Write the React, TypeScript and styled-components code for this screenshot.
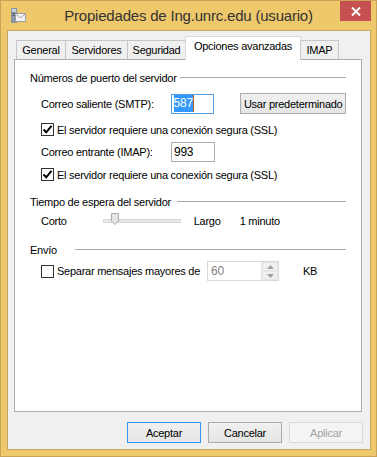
import { createGlobalStyle } from "styled-components";
import styled from "styled-components";

const GlobalStyle = createGlobalStyle`
  html, body {
    margin: 0;
    padding: 0;
    background: #f0c86c;
  }
  * {
    box-sizing: border-box;
  }
`;

const Window = styled.div`
  width: 377px;
  height: 457px;
  background: #f0c86c;
  border: 1px solid #c9a458;
  display: flex;
  flex-direction: column;
  font-family: "Liberation Sans", Arial, sans-serif;
  font-size: 11px;
  letter-spacing: -0.25px;
  color: #000;
`;

const TitleBar = styled.div`
  height: 29px;
  position: relative;
  display: flex;
  align-items: center;
  justify-content: center;
`;

const AppIcon = styled.svg`
  position: absolute;
  left: 8px;
  top: 5px;
`;

const Title = styled.div`
  font-size: 15px;
  letter-spacing: -0.2px;
  color: #333;
`;

const CloseButton = styled.div`
  position: absolute;
  right: 5px;
  top: 0;
  width: 31px;
  height: 20px;
  background: #c75050;
  display: flex;
  align-items: center;
  justify-content: center;
`;

const Client = styled.div`
  flex: 1;
  margin: 0 5px 6px 6px;
  border: 1px solid #c4a867;
  background: #f0f0f0;
  padding: 5px 7px 0 6px;
  display: flex;
  flex-direction: column;
`;

const TabStrip = styled.div`
  height: 23px;
  display: flex;
  align-items: flex-end;
  padding-left: 2px;
  position: relative;
  z-index: 1;
`;

const Tab = styled.div<{ $w: number; $active?: boolean }>`
  width: ${({ $w }) => $w}px;
  height: ${({ $active }) => ($active ? 24 : 19)}px;
  margin-left: -1px;
  margin-bottom: ${({ $active }) => ($active ? -1 : 0)}px;
  border: 1px solid ${({ $active }) => ($active ? "#d9d9d9" : "#c6c6c6")};
  border-bottom: none;
  background: ${({ $active }) => ($active ? "#ffffff" : "#f0f0f0")};
  display: flex;
  justify-content: center;
  padding-top: 3px;
  white-space: nowrap;

  &:first-child {
    margin-left: 0;
  }
`;

const Panel = styled.div`
  width: 348px;
  height: 353px;
  border: 1px solid #adadad;
  background: #fff;
  padding: 11px 15px 0 15px;
  display: flex;
  flex-direction: column;
`;

const GroupHeader = styled.div<{ $mt: number }>`
  height: 14px;
  margin-top: ${({ $mt }) => $mt}px;
  display: flex;
  line-height: 14px;
`;

const GroupLabel = styled.span<{ $w: number }>`
  width: ${({ $w }) => $w}px;
  white-space: nowrap;
`;

const GroupLine = styled.div`
  flex: 1;
  height: 1px;
  margin-top: 6px;
  background: #a9a9a9;
`;

const Row = styled.div<{ $mt: number; $h?: number }>`
  margin-top: ${({ $mt }) => $mt}px;
  height: ${({ $h }) => $h ?? 20}px;
  padding-left: 11px;
  display: flex;
  align-items: center;
  white-space: nowrap;
`;

const FieldLabel = styled.span<{ $w: number }>`
  width: ${({ $w }) => $w}px;
`;

const TextBox = styled.div<{ $focused?: boolean }>`
  width: 44px;
  height: 20px;
  border: 1px solid ${({ $focused }) => ($focused ? "#569de5" : "#abadb3")};
  background: #fff;
  display: flex;
  align-items: center;
  padding-left: 2px;
  font-size: 12px;
`;

const Selected = styled.span`
  background: #3399ff;
  color: #fff;
  padding: 1px 0;
  line-height: 15px;
  border-right: 1px solid #b06020;
`;

const Button = styled.div<{ $w: number; $variant?: "default" | "disabled" }>`
  width: ${({ $w }) => $w}px;
  height: 21px;
  border: 1px solid
    ${({ $variant }) =>
      $variant === "default" ? "#3399ff" : $variant === "disabled" ? "#d9d9d9" : "#acacac"};
  background: ${({ $variant }) =>
    $variant === "disabled" ? "#f4f4f4" : "linear-gradient(#f0f0f0, #e5e5e5)"};
  color: ${({ $variant }) => ($variant === "disabled" ? "#a3a3a3" : "#000")};
  display: flex;
  align-items: center;
  justify-content: center;
  white-space: nowrap;
`;

const CheckBox = styled.div`
  width: 13px;
  height: 13px;
  border: 1px solid #333;
  background: #fff;
  margin-right: 3px;
  display: flex;
  align-items: center;
  justify-content: center;
`;

const SliderTrack = styled.div`
  position: relative;
  width: 78px;
  height: 4px;
  margin: 0 13px 0 36px;
  background: #e7eaea;
  border: 1px solid #d6d6d6;
`;

const SliderThumb = styled.svg`
  position: absolute;
  left: 7px;
  top: -7px;
`;

const SpinBox = styled.div`
  width: 72px;
  height: 20px;
  border: 1px solid #d9d9d9;
  background: #fff;
  display: flex;
  align-items: center;
  padding-left: 3px;
  color: #838383;
  font-size: 12px;
`;

const SpinValue = styled.span`
  flex: 1;
`;

const SpinButtons = styled.div`
  width: 17px;
  height: 18px;
  display: flex;
  flex-direction: column;
  border-left: 1px solid #e3e3e3;
`;

const SpinHalf = styled.div`
  flex: 1;
  display: flex;
  align-items: center;
  justify-content: center;
  background: #f0f0f0;
  border: 1px solid #e6e6e6;
`;

const Footer = styled.div`
  display: flex;
  justify-content: flex-end;
  gap: 7px;
  margin-top: 10px;
`;

const Check = () => (
  <svg width="11" height="11" viewBox="0 0 11 11">
    <path d="M1.5 5.5 L4.2 8.3 L9.5 1.8" stroke="#000" strokeWidth="2" fill="none" />
  </svg>
);

const Arrow = ({ up }: { up?: boolean }) => (
  <svg width="7" height="4" viewBox="0 0 7 4">
    <path d={up ? "M0 4 L3.5 0 L7 4 Z" : "M0 0 L3.5 4 L7 0 Z"} fill="#a0a0a0" />
  </svg>
);

export default function App() {
  return (
    <>
      <GlobalStyle />
      <Window>
        <TitleBar>
          <AppIcon width="18" height="18" viewBox="0 0 18 18">
            <rect x="2" y="2" width="6" height="15" fill="#8a96a3" />
            <rect x="3" y="3" width="4" height="3" fill="#c9d2db" />
            <rect x="3" y="7" width="4" height="1" fill="#5c6772" />
            <rect x="3" y="9" width="4" height="1" fill="#5c6772" />
            <rect x="6.5" y="7.5" width="10" height="8" fill="#f4f4f4" stroke="#9aa0a6" />
            <path d="M6.5 7.5 L11.5 12 L16.5 7.5" stroke="#9aa0a6" fill="none" />
          </AppIcon>
          <Title>Propiedades de Ing.unrc.edu (usuario)</Title>
          <CloseButton>
            <svg width="10" height="9" viewBox="0 0 10 9">
              <path d="M1 0.5 L9 8.5 M9 0.5 L1 8.5" stroke="#fff" strokeWidth="2" />
            </svg>
          </CloseButton>
        </TitleBar>
        <Client>
          <TabStrip>
            <Tab $w={50}>General</Tab>
            <Tab $w={63}>Servidores</Tab>
            <Tab $w={59}>Seguridad</Tab>
            <Tab $w={116} $active>
              Opciones avanzadas
            </Tab>
            <Tab $w={39}>IMAP</Tab>
          </TabStrip>
          <Panel>
            <GroupHeader $mt={0}>
              <GroupLabel $w={150}>Números de puerto del servidor</GroupLabel>
              <GroupLine />
            </GroupHeader>
            <Row $mt={8} $h={21}>
              <FieldLabel $w={130}>Correo saliente (SMTP):</FieldLabel>
              <TextBox $focused>
                <Selected>587</Selected>
              </TextBox>
              <Button $w={106} style={{ marginLeft: 26 }}>
                Usar predeterminado
              </Button>
            </Row>
            <Row $mt={9} $h={13}>
              <CheckBox>
                <Check />
              </CheckBox>
              El servidor requiere una conexión segura (SSL)
            </Row>
            <Row $mt={6} $h={20}>
              <FieldLabel $w={130}>Correo entrante (IMAP):</FieldLabel>
              <TextBox>993</TextBox>
            </Row>
            <Row $mt={6} $h={13}>
              <CheckBox>
                <Check />
              </CheckBox>
              El servidor requiere una conexión segura (SSL)
            </Row>
            <GroupHeader $mt={14}>
              <GroupLabel $w={147}>Tiempo de espera del servidor</GroupLabel>
              <GroupLine />
            </GroupHeader>
            <Row $mt={5} $h={14}>
              <span>Corto</span>
              <SliderTrack>
                <SliderThumb width="8" height="12" viewBox="0 0 8 12">
                  <path
                    d="M0.5 0.5 H7.5 V8 L4 11.5 L0.5 8 Z"
                    fill="#e5e5e5"
                    stroke="#acacac"
                  />
                </SliderThumb>
              </SliderTrack>
              <FieldLabel $w={46}>Largo</FieldLabel>
              <span>1 minuto</span>
            </Row>
            <GroupHeader $mt={15}>
              <GroupLabel $w={45}>Envío</GroupLabel>
              <GroupLine />
            </GroupHeader>
            <Row $mt={4} $h={20}>
              <CheckBox />
              <FieldLabel $w={150}>Separar mensajes mayores de</FieldLabel>
              <SpinBox>
                <SpinValue>60</SpinValue>
                <SpinButtons>
                  <SpinHalf>
                    <Arrow up />
                  </SpinHalf>
                  <SpinHalf>
                    <Arrow />
                  </SpinHalf>
                </SpinButtons>
              </SpinBox>
              <span style={{ marginLeft: 24 }}>KB</span>
            </Row>
          </Panel>
          <Footer>
            <Button $w={74} $variant="default">
              Aceptar
            </Button>
            <Button $w={74}>Cancelar</Button>
            <Button $w={74} $variant="disabled">
              Aplicar
            </Button>
          </Footer>
        </Client>
      </Window>
    </>
  );
}
